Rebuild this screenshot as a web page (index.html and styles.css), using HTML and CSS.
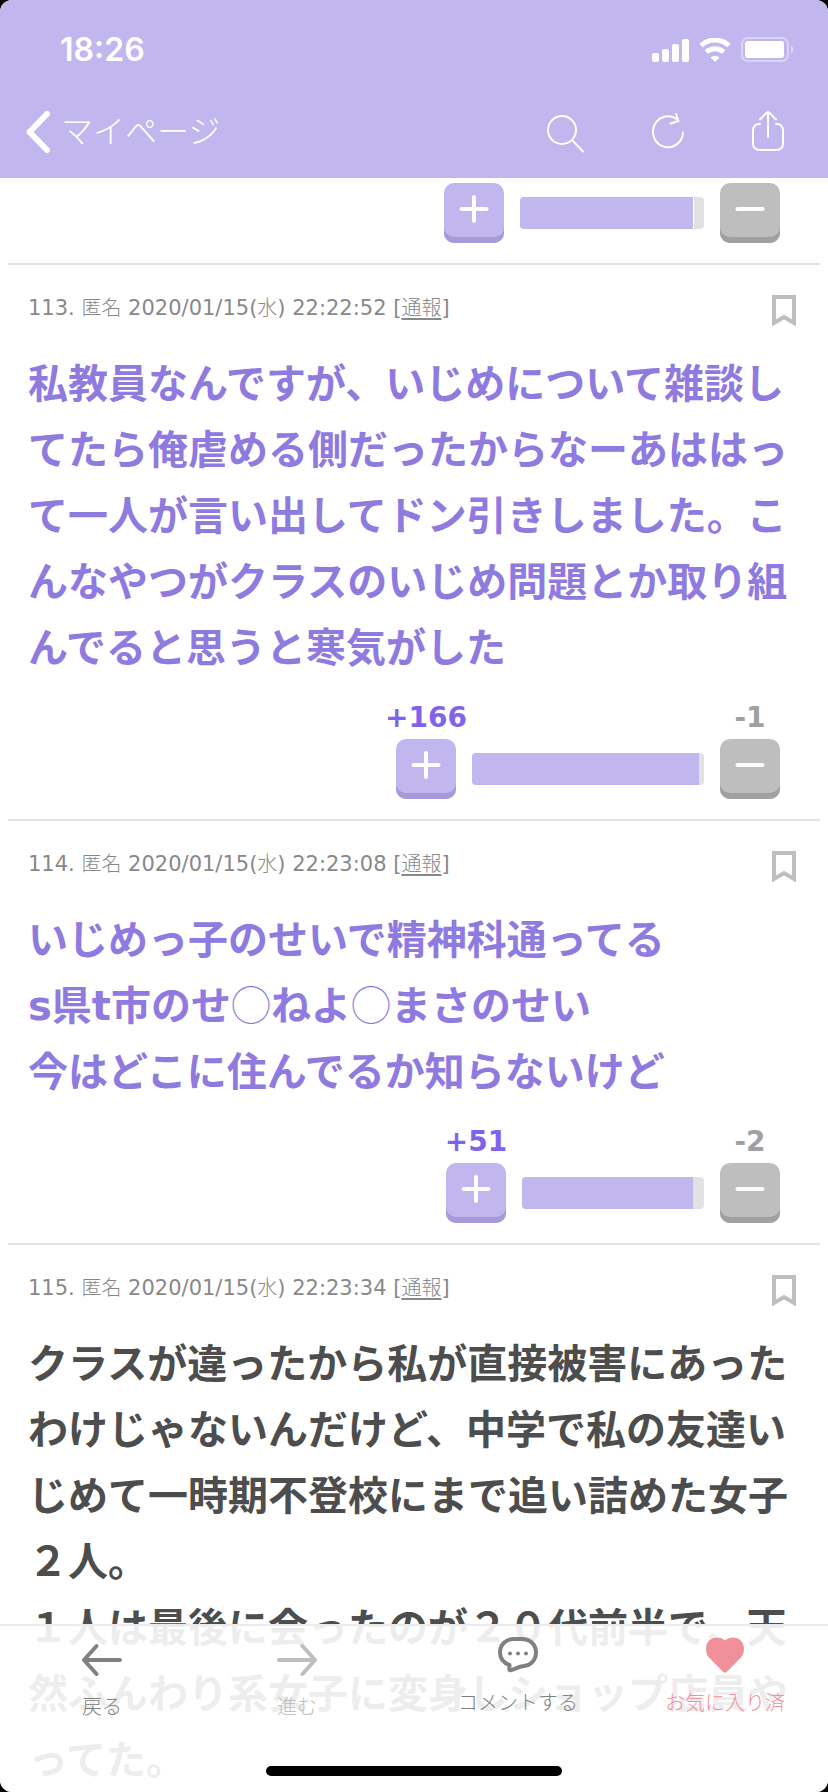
FILE: index.html
```html
<!DOCTYPE html>
<html lang="ja">
<head>
<meta charset="utf-8">
<meta name="viewport" content="width=device-width">
<title>マイページ</title>
<link rel="stylesheet" href="styles.css">
</head>
<body>
<svg class="sprite" aria-hidden="true">
  <symbol id="plus" viewBox="0 0 30 30"><path d="M2.500 15h25M15 3v24" fill="none" stroke="#fff" stroke-width="4" stroke-linecap="round"/></symbol>
  <symbol id="minus" viewBox="0 0 30 30"><path d="M2.500 15h25" fill="none" stroke="#fff" stroke-width="4" stroke-linecap="round"/></symbol>
  <symbol id="bookmark" viewBox="0 0 24 32"><path d="M2 2h20v26l-10-6-10 6z" fill="none" stroke="#bebebe" stroke-width="4"/></symbol>
</svg>
<div class="screen">
  <header class="header">
    <div class="status">
      <time class="clock">18:26</time>
      <div class="indicators">
        <svg width="37" height="24" viewBox="0 0 37 24" fill="#fff"><rect y="15" width="7" height="9" rx="2"/><rect x="10" y="11" width="7" height="13" rx="2"/><rect x="20" y="6" width="7" height="18" rx="2"/><rect x="30" y="1" width="7" height="23" rx="2"/></svg>
        <svg width="32" height="24" viewBox="0 0 32 24"><g fill="none" stroke="#fff" stroke-width="5"><path d="M2 7.500a20.500 20.500 0 0 1 28 0"/><path d="M7.300 14a13 13 0 0 1 17.400 0"/></g><path d="M11.500 19.500a7 7 0 0 1 9 0L16 24z" fill="#fff"/></svg>
        <svg width="53" height="26" viewBox="0 0 53 26"><rect x="1" y="1" width="46" height="23" rx="6" fill="none" stroke="#fff" stroke-opacity=".4" stroke-width="2"/><rect x="4" y="4" width="39" height="17" rx="3" fill="#fff"/><path d="M50 8.500a4.600 4.600 0 0 1 0 8z" fill="#fff" fill-opacity=".45"/></svg>
      </div>
    </div>
    <nav class="toolbar">
      <a class="back" href="#">
        <svg width="24" height="42" viewBox="0 0 24 42"><path d="M21 3 3.500 21 21 39" fill="none" stroke="#fff" stroke-width="6" stroke-linecap="round" stroke-linejoin="round"/></svg>
        <span class="back-label">マイページ</span>
      </a>
      <div class="tools">
        <button class="tool" aria-label="検索"><svg viewBox="0 0 44 44"><circle cx="16" cy="20" r="14"/><path d="m26.500 30.500 10.500 11"/></svg></button>
        <button class="tool" aria-label="再読み込み"><svg viewBox="0 0 44 44"><path d="M37 22.500A15 15.500 0 1 1 32 10.200"/><path d="m30 4 2.500 7-8 2.500"/></svg></button>
        <button class="tool" aria-label="共有"><svg viewBox="0 0 44 44"><path d="M14 14h-1a6 6 0 0 0-6 6v14a6 6 0 0 0 6 6h18a6 6 0 0 0 6-6V20a6 6 0 0 0-6-6h-1M22 27V2M14 9.500 21 2.400q1-1 2 0l7 7.100"/></svg></button>
      </div>
    </nav>
  </header>

  <main class="thread">
    <article class="post post-scrolled">
      <div class="votes">
        <div class="vote"><button class="key key-plus" aria-label="プラス"><svg><use href="#plus"/></svg></button></div>
        <div class="bar" style="width:184px"><span class="fill" style="width:94%"></span></div>
        <div class="vote"><button class="key key-minus" aria-label="マイナス"><svg><use href="#minus"/></svg></button></div>
      </div>
    </article>

    <article class="post">
      <div class="meta"><span>113. <span class="ja">匿名</span> 2020/01/15(<span class="ja">水</span>) 22:22:52 [<a class="ja" href="#">通報</a>]</span><button class="mark" aria-label="ブックマーク"><svg><use href="#bookmark"/></svg></button></div>
      <p class="text popular">私教員なんですが、いじめについて雑談してたら俺虐める側だったからなーあははって一人が言い出してドン引きしました。こんなやつがクラスのいじめ問題とか取り組んでると思うと寒気がした</p>
      <div class="votes">
        <div class="vote"><span class="count count-plus">+166</span><button class="key key-plus" aria-label="プラス"><svg><use href="#plus"/></svg></button></div>
        <div class="bar" style="width:232px"><span class="fill" style="width:98%"></span></div>
        <div class="vote"><span class="count">-1</span><button class="key key-minus" aria-label="マイナス"><svg><use href="#minus"/></svg></button></div>
      </div>
    </article>

    <article class="post">
      <div class="meta"><span>114. <span class="ja">匿名</span> 2020/01/15(<span class="ja">水</span>) 22:23:08 [<a class="ja" href="#">通報</a>]</span><button class="mark" aria-label="ブックマーク"><svg><use href="#bookmark"/></svg></button></div>
      <p class="text popular">いじめっ子のせいで精神科通ってる<br>s県t市のせ<span class="blank">◯</span>ねよ<span class="blank">◯</span>まさのせい<br>今はどこに住んでるか知らないけど</p>
      <div class="votes">
        <div class="vote"><span class="count count-plus">+51</span><button class="key key-plus" aria-label="プラス"><svg><use href="#plus"/></svg></button></div>
        <div class="bar" style="width:182px"><span class="fill" style="width:94%"></span></div>
        <div class="vote"><span class="count">-2</span><button class="key key-minus" aria-label="マイナス"><svg><use href="#minus"/></svg></button></div>
      </div>
    </article>

    <article class="post">
      <div class="meta"><span>115. <span class="ja">匿名</span> 2020/01/15(<span class="ja">水</span>) 22:23:34 [<a class="ja" href="#">通報</a>]</span><button class="mark" aria-label="ブックマーク"><svg><use href="#bookmark"/></svg></button></div>
      <p class="text">クラスが違ったから私が直接被害にあったわけじゃないんだけど、中学で私の友達いじめて一時期不登校にまで追い詰めた女子２人。<br>１人は最後に会ったのが２０代前半で、天然ふんわり系女子に変身しショップ店員やってた。</p>
    </article>
  </main>

  <nav class="tabs">
    <button class="tab tab-history"><svg viewBox="0 0 40 40" fill="none" stroke="currentColor" stroke-width="4" stroke-linecap="round" stroke-linejoin="round"><path d="M38 20H2M14.500 6 2 20l12.500 14"/></svg><span>戻る</span></button>
    <button class="tab tab-history" disabled><svg viewBox="0 0 40 40" fill="none" stroke="currentColor" stroke-width="4" stroke-linecap="round" stroke-linejoin="round"><path d="M2 20h36M25.500 6 38 20 25.500 34"/></svg><span>進む</span></button>
    <button class="tab"><svg viewBox="0 0 40 40"><path d="M16 3h8c8 0 14 5.500 14 13.500S32 29.500 26 30c-5 .5-9 3-13 4.200q-2 .5-1.700-1.500l.2-3.700C6 27 2 22.500 2 16.500 2 8.500 8 3 16 3z" fill="none" stroke="currentColor" stroke-width="4" stroke-linejoin="round"/><g fill="currentColor"><circle cx="12" cy="17.500" r="2"/><circle cx="20" cy="17.500" r="2"/><circle cx="28" cy="17.500" r="2"/></g></svg><span>コメントする</span></button>
    <button class="tab tab-active"><svg viewBox="0 0 40 40" fill="currentColor"><path d="M20 4.500C26-1 39 1 39 13c0 4-1.300 6.700-3.500 9L22 35.700q-2 2-4 0L4.500 22C2.300 19.700 1 17 1 13 1 1 14-1 20 4.500z"/></svg><span>お気に入り済</span></button>
    <div class="home"></div>
  </nav>
</div>
</body>
</html>
```
FILE: styles.css
```css
* { box-sizing: border-box; }
body {
  margin: 0;
  background: #000;
  color: #888;
  font-family: "DejaVu Sans", "Noto Sans CJK JP", sans-serif;
}
button {
  padding: 0;
  border: 0;
  background: none;
  color: inherit;
  font: inherit;
}
a { color: inherit; }
svg { display: block; }
.sprite { position: absolute; width: 0; height: 0; }

.screen {
  position: relative;
  display: flex;
  flex-direction: column;
  height: 100vh;
  overflow: hidden;
  border-radius: 12px;
  background: #fff;
}

.header { flex: none; background: #c1b6ed; color: #fff; }
.status {
  display: flex;
  align-items: center;
  justify-content: space-between;
  padding: 30px 34px 18px 60px;
}
.clock { font: 600 32px/40px Inter, sans-serif; }
.indicators { display: flex; align-items: center; gap: 10px; }
.toolbar {
  display: flex;
  align-items: center;
  justify-content: space-between;
  padding: 22px 38px 24px 26px;
}
.back {
  display: flex;
  align-items: center;
  gap: 11px;
  font: 300 32px/38px "Noto Sans CJK JP", sans-serif;
  text-decoration: none;
}
.back-label { padding-bottom: 6px; }
.tools { display: flex; gap: 56px; }
.tool svg {
  width: 44px;
  height: 44px;
  fill: none;
  stroke: #fff;
  stroke-width: 2;
  stroke-linecap: round;
  stroke-linejoin: round;
}

.thread { flex: 1; min-height: 0; overflow: hidden; padding: 0 8px; }
.post { padding: 30px 24px 20px 20px; border-bottom: 2px solid #e4e4e4; }
.post-scrolled { padding-top: 5px; }
.meta {
  display: flex;
  justify-content: space-between;
  align-items: flex-start;
  height: 32px;
  font-size: 21px;
  line-height: 26px;
}
.ja {
  font-family: "Noto Sans CJK JP", sans-serif;
  font-weight: 300;
  font-size: 20px;
  line-height: 1;
  text-underline-offset: 3px;
}
.mark svg { width: 24px; height: 32px; }
.text {
  margin: 24px 0 18px;
  color: #4d4d4d;
  font-weight: 600;
  font-size: 40px;
  line-height: 66px;
}
.popular { color: #8f7ae0; }
.blank {
  font-family: "Noto Sans CJK JP", sans-serif;
  font-weight: 300;
  line-height: 1;
}

.votes {
  display: flex;
  align-items: flex-end;
  justify-content: flex-end;
  gap: 16px;
  padding-right: 16px;
}
.vote {
  display: flex;
  flex-direction: column;
  align-items: center;
  gap: 2px;
  width: 60px;
}
.count {
  color: #a0a0a0;
  font-weight: 700;
  font-size: 28px;
  line-height: 38px;
  white-space: nowrap;
}
.count-plus { color: #8063ec; }
.key {
  width: 60px;
  height: 60px;
  padding: 11px 15px 19px;
  border-radius: 10px;
}
.key svg { width: 30px; height: 30px; }
.key-plus { background: #c1b6ed; box-shadow: inset 0 -6px #a89ad9; }
.key-minus { background: #bebebe; box-shadow: inset 0 -6px #a0a0a0; }
.bar {
  height: 32px;
  margin-bottom: 14px;
  overflow: hidden;
  border-radius: 4px;
  background: #e2e2e2;
}
.fill { display: block; height: 100%; background: #c1b6ed; }
.post-scrolled .fill { box-shadow: 1px 0 #fff; }

.tabs {
  position: absolute;
  right: 0;
  bottom: 0;
  left: 0;
  display: grid;
  grid-template-columns: 204fr 186fr 256fr 158fr;
  padding-right: 24px;
  padding-bottom: 26px;
  border-top: 2px solid #ebebeb;
  background: rgba(255, 255, 255, 0.9);
  color: #808080;
}
.tab {
  display: flex;
  flex-direction: column;
  align-items: center;
  gap: 14px;
  padding: 10px 0 52px;
  font: 300 20px/24px "Noto Sans CJK JP", sans-serif;
  white-space: nowrap;
}
.tab svg { width: 40px; height: 40px; }
.tab-history { padding: 14px 0 48px; }
.tab:disabled { color: #bebebe; }
.tab-active { color: #f0919a; }
.home {
  position: absolute;
  right: 0;
  bottom: 16px;
  left: 0;
  width: 296px;
  height: 10px;
  margin: 0 auto;
  border-radius: 5px;
  background: #000;
}
```
